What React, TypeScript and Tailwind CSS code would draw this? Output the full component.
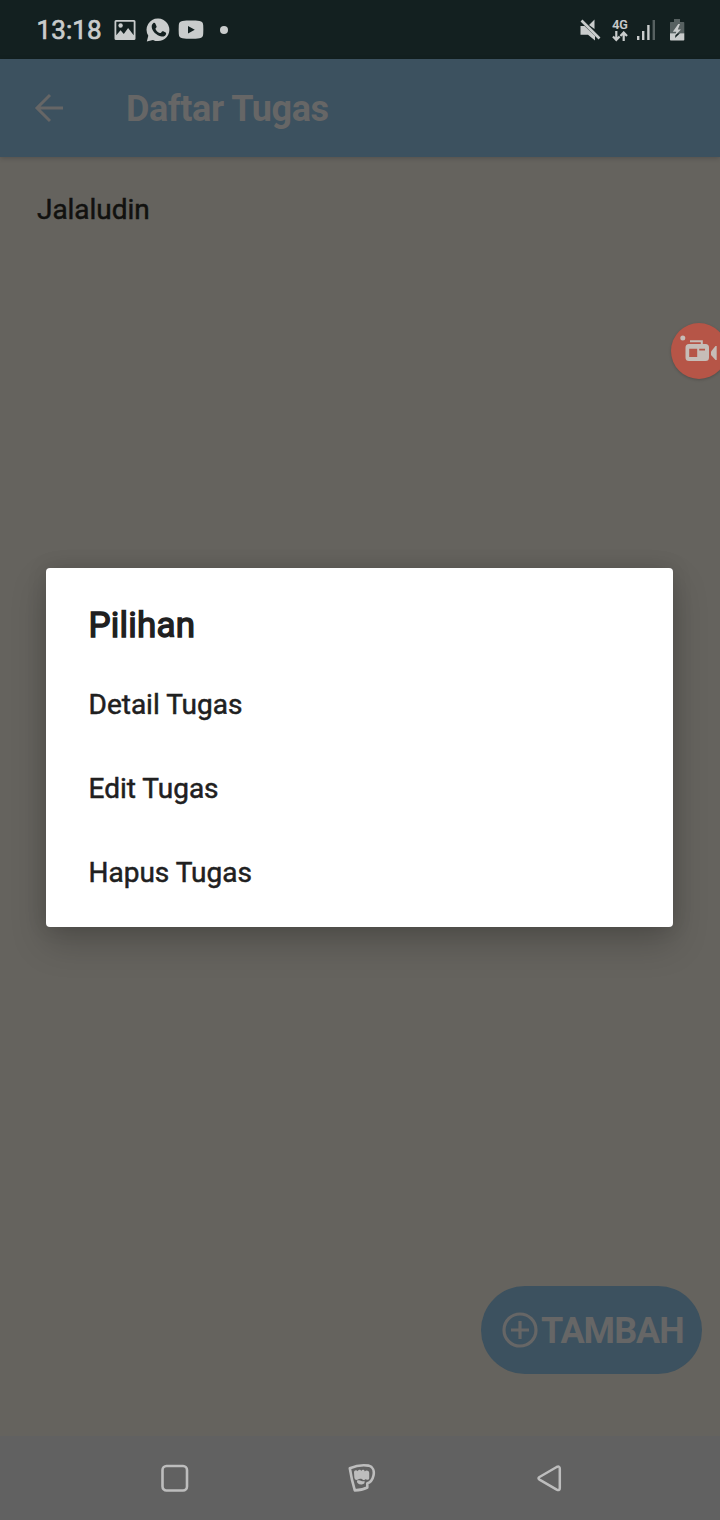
import React from "react";

function StatusBar() {
  return (
    <header className="flex h-[59px] shrink-0 items-center justify-between bg-[#132020] pl-[36.500px] pr-[35px] text-[#c9cccc]">
      <div className="flex items-center">
        <span className="w-[77.500px] pt-px text-[26px] leading-[59px] tracking-[0.1px] [-webkit-text-stroke:0.7px_#c9cccc]">13:18</span>
        <svg width="22" height="22" viewBox="0 0 22 22" fill="currentColor">
          <path fillRule="evenodd" d="M2 1h18a1.5 1.5 0 0 1 1.5 1.5v17A1.5 1.5 0 0 1 20 21H2a1.5 1.5 0 0 1-1.500-1.500v-17A1.500 1.500 0 0 1 2 1Zm.3 1.800v13.500l4.200-5.100 3.300 3.900 4.300-6.100 5.600 7.200V2.800Z" />
          <circle cx="6.600" cy="6.500" r="2.200" />
        </svg>
        <svg width="24" height="24" viewBox="0 0 24 24" className="ml-[10px]" fill="currentColor">
          <path d="M12.300.5A11.300 11.300 0 1 1 7 21.900L.8 23.400l1.500-5.700A11.300 11.300 0 0 1 12.300.5Z" />
          <path fill="#132020" d="M7.200 5.300c.6-.6 1.700-.6 2.100.2l1.200 2.700c.3.700-.1 1.300-.8 2-.3.400-.3.700 0 1.200 1 1.700 2.300 2.900 4.100 3.600.5.200.8.200 1.200-.3l1-1.200c.4-.4.800-.4 1.300-.2l2.300 1.200c.7.400.6.900.4 1.700-.5 1.700-2.600 2.700-4.400 2.300-5.300-1.200-9.600-5.500-9.900-9.600-.1-1.500.5-2.700 1.500-3.600Z" />
        </svg>
        <svg width="26" height="20" viewBox="0 0 26 20" className="ml-[8px]" fill="currentColor">
          <path fillRule="evenodd" d="M4.500 1C9 .4 17 .4 21.500 1c2.500.4 3.600 1.600 3.700 4 .2 3 .2 6 0 9-.1 2.600-1.200 3.800-3.700 4.200-4.500.7-12.500.7-17 0C2 17.800.9 16.600.8 14c-.2-3-.2-6 0-9C.9 2.600 2 1.400 4.500 1ZM10 6v7.400l6.800-3.700Z" />
        </svg>
        <span className="ml-[16px] h-2 w-2 rounded-full bg-current" />
      </div>
      <div className="flex items-center">
        <svg width="22" height="24" viewBox="0 0 22 24" fill="currentColor">
          <path d="M.5 8h4L15 18v4.500L8 16.700H.5ZM14.500 1.500V11L9 7Z" />
          <path d="M1.500 2.500 19.500 20.500" stroke="currentColor" strokeWidth="2.600" />
        </svg>
        <div className="ml-[9px] flex w-[18px] flex-col items-center pt-px">
          <span className="text-[12.500px] leading-[12px] font-medium [-webkit-text-stroke:0.2px_#c9cccc]">4G</span>
          <svg width="16" height="11" viewBox="0 0 16 11" fill="none" stroke="currentColor" strokeWidth="2.200">
            <path d="M4.300 0v9M1 5.500l3.300 3.500L7.600 5.500M11.700 10V1.500M8.400 5l3.300-3.500L15 5" />
          </svg>
        </div>
        <svg width="20" height="22" viewBox="0 0 20 22" className="ml-[7px]" fill="currentColor">
          <path d="M1 17h2.400v4H1zM6 12h2.400v9H6zM11.200 6h2.400v15h-2.400z" />
          <path opacity=".38" d="M16.600 1h2.400v20h-2.400z" />
        </svg>
        <svg width="16" height="24" viewBox="0 0 16 24" className="ml-[13px]" fill="currentColor">
          <path opacity=".38" d="M5 1h6v3h3.500q.8 0 .8.800v10.400H1V4.800Q1 4 1.800 4H5Z" />
          <path d="M1 15.200h14.300v6.500q0 .8-.8.800H1.800q-.8 0-.8-.8Z" />
          <path fill="#132020" d="M8.500 15.200H11L6 20l.5-3Z" />
          <path d="M9.300 6 3.800 13.800h3.500L6.500 17l5.500-5.400H8.800L11 6Z" />
        </svg>
      </div>
    </header>
  );
}

function RecorderBubble() {
  return (
    <div className="absolute left-[671px] top-[323px] h-14 w-[49px]">
      <div className="h-14 w-14 rounded-full bg-[#b65547] shadow-[0_1px_3px_rgba(0,0,0,0.2)]">
        <svg width="49" height="56" viewBox="0 0 49 56" fill="#c6bdb7">
          <circle cx="11.800" cy="15" r="2.500" />
          <path d="M19 17.200h12.800v4.300h-2v-2.300H19Z" />
          <path fillRule="evenodd" d="M18 21h16.500q3.500 0 3.500 3.500v10q0 3.500-3.500 3.500H18q-3.500 0-3.500-3.500v-10Q14.500 21 18 21Zm.2 4.700v8.300h8v-8.300Zm10 .1v1.700h5.800v-1.700Z" />
          <path d="M40 28.500 44.500 23h1.200v14h-1.200L40 32Z" />
        </svg>
      </div>
    </div>
  );
}

function OptionsDialog() {
  const options = ["Detail Tugas", "Edit Tugas", "Hapus Tugas"];
  return (
    <section role="dialog" className="absolute left-[46px] top-[568px] flex h-[359px] w-[627px] flex-col rounded-[4px] bg-white pl-[42.500px] pt-[32px] text-[#202020] shadow-[0_16px_36px_rgba(0,0,0,0.2),0_0_20px_rgba(0,0,0,0.12)]">
      <h2 className="h-[63px] text-[35px] leading-[51px] font-normal tracking-[0.2px] [-webkit-text-stroke:1.4px_#202020]">Pilihan</h2>
      <ul>
        {options.map((option) => (
          <li key={option} className="h-[84px] text-[28px] leading-[84px] [-webkit-text-stroke:0.5px_#202020]">{option}</li>
        ))}
      </ul>
    </section>
  );
}

function NavigationBar() {
  return (
    <nav className="flex h-[84px] shrink-0 items-center bg-[#616161] pl-[160px] text-[#bdbdbd]">
      <svg width="30" height="30" viewBox="0 0 30 30" fill="none" stroke="currentColor" strokeWidth="2.600">
        <rect x="2.500" y="3" width="24.500" height="24.500" rx="4" />
      </svg>
      <svg width="30" height="30" viewBox="0 0 30 30" className="ml-[157px]" fill="none" stroke="currentColor" strokeWidth="2.600" strokeLinejoin="round">
        <path d="M2.800 5.300C9 2.600 15.500 1.600 21.500 2.600c4.500 1 6 5.200 5 10-1 4.600-3 7-6.200 7.700v4.200c-3.800 2-8.300 2.900-12.500 2.900C5.500 20 4 13 2.800 5.300Z" />
        <path fill="currentColor" stroke="none" d="M7 9.300c0-2.200 2.600-2.800 3.600-1 .8-2 3-2 3.600-.3 1-1.900 3.300-1.400 3.600.5 1-1.800 4.200-1.200 4.400 1.200v5.500c-.2 1.800-2.400 2.200-3.300.8-1 1.500-3 1.400-3.600.2-2-.8-3.300-.4-4.700.6-1.900.5-3.200-.5-3.300-2.500Zm2.900 8.500c1.500-.8 3-.5 4.500.3 1.400.4 2.500.2 3-.3.800 2.200-.5 3.600-2.600 3.600-2.700.2-5-.7-4.900-3.600Z" />
      </svg>
      <svg width="30" height="30" viewBox="0 0 30 30" className="ml-[158px]" fill="none" stroke="currentColor" strokeWidth="2.500" strokeLinejoin="round">
        <path d="M4.500 14 21.700 4q3.100-1.400 3.100 1.700v19.200q0 3.100-3.100 1.700L4.500 16.600q-2-1.300 0-2.600Z" />
      </svg>
    </nav>
  );
}

export default function App() {
  return (
    <div className="relative flex h-[1520px] w-[720px] flex-col overflow-hidden bg-[#65635e] font-[Roboto,sans-serif]">
      <StatusBar />
      <div className="z-0 flex h-[98px] shrink-0 items-center bg-[#3c515f] pl-[34px] text-[#666666] shadow-[0_1px_5px_rgba(0,0,0,0.2)]">
        <svg width="30" height="30" viewBox="0 0 30 30" fill="none" stroke="currentColor" strokeWidth="3">
          <path d="M29 15H4M16 2 3 15l13 13" />
        </svg>
        <h1 className="ml-[62px] pt-[2px] text-[36px] leading-[49px] font-bold tracking-[-0.420px]">Daftar Tugas</h1>
      </div>
      <main className="flex flex-1 flex-col justify-between">
        <p className="pl-[37px] pt-[32px] text-[28px] leading-[42px] tracking-[-0.05px] text-[#11110f] [-webkit-text-stroke:0.5px_#11110f]">Jalaludin</p>
        <button className="mb-[62px] mr-[18px] flex h-[88px] w-[221px] items-center self-end rounded-full bg-[#3c515f] pl-5 text-[#666666]">
          <svg width="38" height="38" viewBox="0 0 38 38" fill="none" stroke="currentColor" strokeWidth="3.200">
            <circle cx="19" cy="19" r="16" />
            <path d="M19 10v18M10 19h18" />
          </svg>
          <span className="ml-[2px] pt-[2px] text-[36px] leading-[48px] font-bold tracking-[-1px]">TAMBAH</span>
        </button>
      </main>
      <NavigationBar />
      <RecorderBubble />
      <OptionsDialog />
    </div>
  );
}
